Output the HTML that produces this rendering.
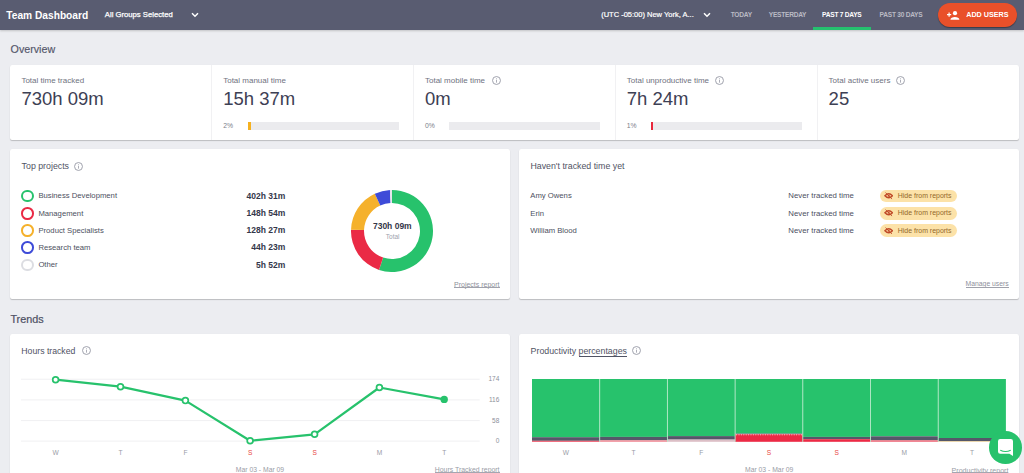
<!DOCTYPE html>
<html><head><meta charset="utf-8">
<style>
*{margin:0;padding:0;box-sizing:border-box}
html,body{width:1024px;height:473px;overflow:hidden;background:#ecedf1;font-family:"Liberation Sans",sans-serif}
.a{position:absolute;white-space:nowrap;line-height:1}
u{text-decoration:underline}
</style></head><body>
<div class="a" style="left:0.00px;top:0.00px;width:1024.00px;height:30.00px;background:#595c71;box-shadow:0 1px 2px rgba(0,0,0,0.18)"></div>
<div class="a " style="left:6.30px;top:10.52px;font-size:10.20px;font-weight:bold;color:#fff">Team Dashboard</div>
<div class="a " style="left:104.80px;top:11.28px;font-size:7.70px;color:#fff;-webkit-text-stroke:0.25px #fff">All Groups Selected</div>
<svg class="a" style="left:190.5px;top:12.2px" width="8" height="6" viewBox="0 0 8 6"><path d="M1 1.2 L4 4.2 L7 1.2" stroke="#fff" stroke-width="1.5" fill="none"/></svg>
<div class="a " style="left:601.20px;top:11.25px;font-size:7.50px;color:#fff;-webkit-text-stroke:0.2px #fff">(UTC -05:00) New York, A...</div>
<svg class="a" style="left:703px;top:12.3px" width="8" height="6" viewBox="0 0 8 6"><path d="M1 1.2 L4 4.2 L7 1.2" stroke="#fff" stroke-width="1.5" fill="none"/></svg>
<div class="a " style="left:730.70px;top:12.11px;font-size:6.60px;font-weight:bold;letter-spacing:-0.25px;color:#b9bac4">TODAY</div>
<div class="a " style="left:768.80px;top:12.11px;font-size:6.60px;font-weight:bold;letter-spacing:-0.25px;color:#b9bac4">YESTERDAY</div>
<div class="a " style="left:822.10px;top:12.11px;font-size:6.60px;font-weight:bold;letter-spacing:-0.25px;color:#fff">PAST 7 DAYS</div>
<div class="a " style="left:879.60px;top:12.11px;font-size:6.60px;font-weight:bold;letter-spacing:-0.25px;color:#b9bac4">PAST 30 DAYS</div>
<div class="a" style="left:813.30px;top:27.00px;width:57.80px;height:3.00px;background:#25c16f"></div>
<div class="a" style="left:938.00px;top:3.00px;width:79.30px;height:24.00px;border-radius:12px;background:#e9502a;box-shadow:0 1px 1px rgba(0,0,0,0.35)"></div>
<svg class="a" style="left:946.5px;top:10.5px" width="13" height="9" viewBox="0 0 13 9"><path d="M0 3.7h4.2M2.1 1.6v4.2" stroke="#fff" stroke-width="1.2"/><circle cx="8" cy="2.2" r="2.1" fill="#fff"/><path d="M3.4 8.7 C3.4 5.2 12.4 5.2 12.4 8.7Z" fill="#fff"/></svg>
<div class="a " style="left:966.20px;top:11.31px;font-size:7.20px;font-weight:bold;color:#fff">ADD USERS</div>
<div class="a " style="left:10.60px;top:44.24px;font-size:10.70px;color:#53566a;-webkit-text-stroke:0.15px #53566a">Overview</div>
<div class="a" style="left:10.00px;top:65.00px;width:1009.00px;height:75.00px;background:#fff;border-radius:2px;box-shadow:0 1px 1px rgba(0,0,0,0.2),0 0 1px rgba(0,0,0,0.06)"></div>
<div class="a" style="left:211.00px;top:65.00px;width:1.00px;height:75.00px;background:#f1f1f3"></div>
<div class="a" style="left:413.00px;top:65.00px;width:1.00px;height:75.00px;background:#f1f1f3"></div>
<div class="a" style="left:615.00px;top:65.00px;width:1.00px;height:75.00px;background:#f1f1f3"></div>
<div class="a" style="left:817.00px;top:65.00px;width:1.00px;height:75.00px;background:#f1f1f3"></div>
<div class="a " style="left:21.40px;top:76.63px;font-size:8.00px;color:#6f7280">Total time tracked</div>
<div class="a " style="left:21.40px;top:89.84px;font-size:18.50px;color:#3d4054">730h 09m</div>
<div class="a " style="left:223.20px;top:76.63px;font-size:8.00px;color:#6f7280">Total manual time</div>
<div class="a " style="left:223.20px;top:89.84px;font-size:18.50px;color:#3d4054">15h 37m</div>
<div class="a " style="left:223.20px;top:123.04px;font-size:6.80px;color:#7b7e8a">2%</div>
<div class="a" style="left:247.60px;top:122.00px;width:151.00px;height:8.00px;background:#ebebee"></div>
<div class="a" style="left:247.60px;top:122.00px;width:3.70px;height:8.00px;background:#f5b120"></div>
<div class="a " style="left:425.00px;top:76.63px;font-size:8.00px;color:#6f7280">Total mobile time</div>
<div class="a " style="left:425.00px;top:89.84px;font-size:18.50px;color:#3d4054">0m</div>
<div class="a " style="left:425.00px;top:123.04px;font-size:6.80px;color:#7b7e8a">0%</div>
<div class="a" style="left:449.40px;top:122.00px;width:151.00px;height:8.00px;background:#ebebee"></div>
<div class="a " style="left:626.80px;top:76.63px;font-size:8.00px;color:#6f7280">Total unproductive time</div>
<div class="a " style="left:626.80px;top:89.84px;font-size:18.50px;color:#3d4054">7h 24m</div>
<div class="a " style="left:626.80px;top:123.04px;font-size:6.80px;color:#7b7e8a">1%</div>
<div class="a" style="left:651.20px;top:122.00px;width:151.00px;height:8.00px;background:#ebebee"></div>
<div class="a" style="left:651.20px;top:122.00px;width:2.00px;height:8.00px;background:#e8283c"></div>
<div class="a " style="left:828.60px;top:76.63px;font-size:8.00px;color:#6f7280">Total active users</div>
<div class="a " style="left:828.60px;top:89.84px;font-size:18.50px;color:#3d4054">25</div>
<svg class="a" style="left:491.80px;top:76.00px" width="9" height="9" viewBox="0 0 10 10"><circle cx="5" cy="5" r="4.4" fill="none" stroke="#9a9ca8" stroke-width="1.05"/><rect x="4.55" y="4.2" width="0.9" height="3.2" fill="#9a9ca8"/><rect x="4.55" y="2.6" width="0.9" height="0.9" fill="#9a9ca8"/></svg>
<svg class="a" style="left:715.10px;top:76.10px" width="9" height="9" viewBox="0 0 10 10"><circle cx="5" cy="5" r="4.4" fill="none" stroke="#9a9ca8" stroke-width="1.05"/><rect x="4.55" y="4.2" width="0.9" height="3.2" fill="#9a9ca8"/><rect x="4.55" y="2.6" width="0.9" height="0.9" fill="#9a9ca8"/></svg>
<svg class="a" style="left:896.40px;top:76.10px" width="9" height="9" viewBox="0 0 10 10"><circle cx="5" cy="5" r="4.4" fill="none" stroke="#9a9ca8" stroke-width="1.05"/><rect x="4.55" y="4.2" width="0.9" height="3.2" fill="#9a9ca8"/><rect x="4.55" y="2.6" width="0.9" height="0.9" fill="#9a9ca8"/></svg>
<div class="a" style="left:10.00px;top:149.00px;width:500.30px;height:150.00px;background:#fff;border-radius:2px;box-shadow:0 1px 1px rgba(0,0,0,0.2),0 0 1px rgba(0,0,0,0.06)"></div>
<div class="a" style="left:519.00px;top:149.00px;width:500.30px;height:150.00px;background:#fff;border-radius:2px;box-shadow:0 1px 1px rgba(0,0,0,0.2),0 0 1px rgba(0,0,0,0.06)"></div>
<div class="a " style="left:21.60px;top:162.05px;font-size:8.80px;color:#505364">Top projects</div>
<svg class="a" style="left:73.80px;top:161.80px" width="9" height="9" viewBox="0 0 10 10"><circle cx="5" cy="5" r="4.4" fill="none" stroke="#9a9ca8" stroke-width="1.05"/><rect x="4.55" y="4.2" width="0.9" height="3.2" fill="#9a9ca8"/><rect x="4.55" y="2.6" width="0.9" height="0.9" fill="#9a9ca8"/></svg>
<div class="a" style="left:21.10px;top:189.70px;width:12.6px;height:12.6px;border-radius:50%;border:2.6px solid #27c26c"></div>
<div class="a " style="left:38.40px;top:192.28px;font-size:7.70px;color:#4c4f60">Business Development</div>
<div class="a " style="right:738.80px;top:191.60px;font-size:8.50px;font-weight:bold;color:#34374a">402h 31m</div>
<div class="a" style="left:21.10px;top:206.95px;width:12.6px;height:12.6px;border-radius:50%;border:2.6px solid #ea2a45"></div>
<div class="a " style="left:38.40px;top:209.53px;font-size:7.70px;color:#4c4f60">Management</div>
<div class="a " style="right:738.80px;top:208.85px;font-size:8.50px;font-weight:bold;color:#34374a">148h 54m</div>
<div class="a" style="left:21.10px;top:224.20px;width:12.6px;height:12.6px;border-radius:50%;border:2.6px solid #f5b12c"></div>
<div class="a " style="left:38.40px;top:226.78px;font-size:7.70px;color:#4c4f60">Product Specialists</div>
<div class="a " style="right:738.80px;top:226.10px;font-size:8.50px;font-weight:bold;color:#34374a">128h 27m</div>
<div class="a" style="left:21.10px;top:241.45px;width:12.6px;height:12.6px;border-radius:50%;border:2.6px solid #3e4bd8"></div>
<div class="a " style="left:38.40px;top:244.03px;font-size:7.70px;color:#4c4f60">Research team</div>
<div class="a " style="right:738.80px;top:243.35px;font-size:8.50px;font-weight:bold;color:#34374a">44h 23m</div>
<div class="a" style="left:21.10px;top:258.70px;width:12.6px;height:12.6px;border-radius:50%;border:2.6px solid #dcdde2"></div>
<div class="a " style="left:38.40px;top:261.28px;font-size:7.70px;color:#4c4f60">Other</div>
<div class="a " style="right:738.80px;top:260.60px;font-size:8.50px;font-weight:bold;color:#34374a">5h 52m</div>
<svg class="a" style="left:351.2px;top:189.7px" width="82" height="82" viewBox="0 0 82 82"><path d="M41.00 0.00A41 41 0 1 1 28.01 79.89L32.13 67.56A28 28 0 1 0 41.00 13.00Z" fill="#27c26c"/><path d="M28.01 79.89A41 41 0 0 1 0.02 39.65L13.02 40.08A28 28 0 0 0 32.13 67.56Z" fill="#ea2a45"/><path d="M0.02 39.65A41 41 0 0 1 23.82 3.77L29.27 15.58A28 28 0 0 0 13.02 40.08Z" fill="#f5b12c"/><path d="M23.82 3.77A41 41 0 0 1 38.93 0.05L39.59 13.04A28 28 0 0 0 29.27 15.58Z" fill="#3e4bd8"/><path d="M38.93 0.05A41 41 0 0 1 41.00 0.00L41.00 13.00A28 28 0 0 0 39.59 13.04Z" fill="#e6e6ea"/></svg>
<div class="a " style="left:372.30px;top:222.00px;font-size:8.50px;width:40px;text-align:center;font-weight:bold;color:#34374a">730h 09m</div>
<div class="a " style="left:372.70px;top:233.70px;font-size:6.50px;width:40px;text-align:center;color:#a0a2ad">Total</div>
<div class="a " style="left:454.00px;top:281.07px;font-size:7.00px;color:#8e909b">Projects report</div>
<div class="a" style="left:454.00px;top:287.40px;width:45.70px;height:0.80px;background:#9fa1ab"></div>
<div class="a " style="left:530.40px;top:161.95px;font-size:8.80px;color:#505364">Haven't tracked time yet</div>
<div class="a " style="left:530.30px;top:192.38px;font-size:7.70px;color:#4c4f60">Amy Owens</div>
<div class="a " style="left:788.30px;top:192.30px;font-size:7.80px;color:#4c4f60">Never tracked time</div>
<div class="a" style="left:879.50px;top:189.60px;width:77.00px;height:12.80px;border-radius:6.5px;background:#fce2a8"></div>
<svg class="a" style="left:884px;top:192.00px" width="9.4" height="7.6" viewBox="0 0 10 8"><path d="M1 4 Q5 -0.2 9 4 Q5 8.2 1 4Z" fill="none" stroke="#c04a28" stroke-width="1.5"/><circle cx="5" cy="4" r="1.1" fill="#c04a28"/><path d="M1.6 0.6 L8.6 7.5" stroke="#c04a28" stroke-width="0.9"/></svg>
<div class="a " style="left:897.80px;top:193.11px;font-size:6.96px;color:#93692b">Hide from reports</div>
<div class="a " style="left:530.30px;top:209.58px;font-size:7.70px;color:#4c4f60">Erin</div>
<div class="a " style="left:788.30px;top:209.50px;font-size:7.80px;color:#4c4f60">Never tracked time</div>
<div class="a" style="left:879.50px;top:206.90px;width:77.00px;height:12.80px;border-radius:6.5px;background:#fce2a8"></div>
<svg class="a" style="left:884px;top:209.30px" width="9.4" height="7.6" viewBox="0 0 10 8"><path d="M1 4 Q5 -0.2 9 4 Q5 8.2 1 4Z" fill="none" stroke="#c04a28" stroke-width="1.5"/><circle cx="5" cy="4" r="1.1" fill="#c04a28"/><path d="M1.6 0.6 L8.6 7.5" stroke="#c04a28" stroke-width="0.9"/></svg>
<div class="a " style="left:897.80px;top:210.41px;font-size:6.96px;color:#93692b">Hide from reports</div>
<div class="a " style="left:530.30px;top:226.78px;font-size:7.70px;color:#4c4f60">William Blood</div>
<div class="a " style="left:788.30px;top:226.70px;font-size:7.80px;color:#4c4f60">Never tracked time</div>
<div class="a" style="left:879.50px;top:224.20px;width:77.00px;height:12.80px;border-radius:6.5px;background:#fce2a8"></div>
<svg class="a" style="left:884px;top:226.60px" width="9.4" height="7.6" viewBox="0 0 10 8"><path d="M1 4 Q5 -0.2 9 4 Q5 8.2 1 4Z" fill="none" stroke="#c04a28" stroke-width="1.5"/><circle cx="5" cy="4" r="1.1" fill="#c04a28"/><path d="M1.6 0.6 L8.6 7.5" stroke="#c04a28" stroke-width="0.9"/></svg>
<div class="a " style="left:897.80px;top:227.71px;font-size:6.96px;color:#93692b">Hide from reports</div>
<div class="a " style="left:965.60px;top:280.84px;font-size:6.80px;color:#8e909b">Manage users</div>
<div class="a" style="left:965.60px;top:287.10px;width:43.20px;height:0.80px;background:#9fa1ab"></div>
<div class="a " style="left:10.40px;top:313.86px;font-size:10.80px;color:#4d5064;-webkit-text-stroke:0.2px #4d5064">Trends</div>
<div class="a" style="left:10.00px;top:334.00px;width:500.30px;height:160.00px;background:#fff;border-radius:2px;box-shadow:0 1px 1px rgba(0,0,0,0.2),0 0 1px rgba(0,0,0,0.06)"></div>
<div class="a" style="left:519.00px;top:334.00px;width:500.30px;height:160.00px;background:#fff;border-radius:2px;box-shadow:0 1px 1px rgba(0,0,0,0.2),0 0 1px rgba(0,0,0,0.06)"></div>
<div class="a " style="left:21.30px;top:346.94px;font-size:8.70px;color:#505364">Hours tracked</div>
<svg class="a" style="left:82.10px;top:346.00px" width="9" height="9" viewBox="0 0 10 10"><circle cx="5" cy="5" r="4.4" fill="none" stroke="#9a9ca8" stroke-width="1.05"/><rect x="4.55" y="4.2" width="0.9" height="3.2" fill="#9a9ca8"/><rect x="4.55" y="2.6" width="0.9" height="0.9" fill="#9a9ca8"/></svg>
<svg class="a" style="left:0;top:0" width="1024" height="473"><rect x="21" y="378.70" width="458.7" height="1" fill="#f0f0f2"/><rect x="21" y="399.40" width="458.7" height="1" fill="#f0f0f2"/><rect x="21" y="420.10" width="458.7" height="1" fill="#f0f0f2"/><rect x="21" y="440.60" width="458.7" height="1" fill="#f0f0f2"/><polyline points="55.6,379.7 120.5,386.7 185.4,400.6 250.1,440.8 314.6,434.3 379.4,387.5 444.2,399.4" fill="none" stroke="#27c26c" stroke-width="2.2" stroke-linejoin="round"/><circle cx="55.6" cy="379.7" r="2.9" fill="#fff" stroke="#27c26c" stroke-width="1.7"/><circle cx="120.5" cy="386.7" r="2.9" fill="#fff" stroke="#27c26c" stroke-width="1.7"/><circle cx="185.4" cy="400.6" r="2.9" fill="#fff" stroke="#27c26c" stroke-width="1.7"/><circle cx="250.1" cy="440.8" r="2.9" fill="#fff" stroke="#27c26c" stroke-width="1.7"/><circle cx="314.6" cy="434.3" r="2.9" fill="#fff" stroke="#27c26c" stroke-width="1.7"/><circle cx="379.4" cy="387.5" r="2.9" fill="#fff" stroke="#27c26c" stroke-width="1.7"/><circle cx="444.2" cy="399.4" r="3.7" fill="#27c26c"/></svg>
<div class="a " style="right:524.70px;top:376.45px;font-size:6.50px;color:#8e909b">174</div>
<div class="a " style="right:524.70px;top:397.15px;font-size:6.50px;color:#8e909b">116</div>
<div class="a " style="right:524.70px;top:417.85px;font-size:6.50px;color:#8e909b">58</div>
<div class="a " style="right:524.70px;top:438.35px;font-size:6.50px;color:#8e909b">0</div>
<div class="a " style="left:35.60px;top:450.11px;font-size:6.60px;width:40px;text-align:center;color:#9a9ca6">W</div>
<div class="a " style="left:100.50px;top:450.11px;font-size:6.60px;width:40px;text-align:center;color:#9a9ca6">T</div>
<div class="a " style="left:165.40px;top:450.11px;font-size:6.60px;width:40px;text-align:center;color:#9a9ca6">F</div>
<div class="a " style="left:230.10px;top:450.11px;font-size:6.60px;width:40px;text-align:center;color:#e8473f">S</div>
<div class="a " style="left:294.60px;top:450.11px;font-size:6.60px;width:40px;text-align:center;color:#e8473f">S</div>
<div class="a " style="left:359.40px;top:450.11px;font-size:6.60px;width:40px;text-align:center;color:#9a9ca6">M</div>
<div class="a " style="left:424.20px;top:450.11px;font-size:6.60px;width:40px;text-align:center;color:#9a9ca6">T</div>
<div class="a " style="left:235.80px;top:466.84px;font-size:6.80px;color:#9a9ca6">Mar 03 - Mar 09</div>
<div class="a " style="left:434.80px;top:467.26px;font-size:6.90px;color:#9a9ca6">Hours Tracked report</div>
<div class="a" style="left:434.80px;top:472.00px;width:64.80px;height:1.00px;background:#a4a6b0"></div>
<div class="a " style="left:530.60px;top:346.95px;font-size:8.80px;color:#505364">Productivity percentages</div>
<div class="a" style="left:578.90px;top:356.00px;width:48.10px;height:1.00px;background:#505364"></div>
<svg class="a" style="left:631.50px;top:346.00px" width="9" height="9" viewBox="0 0 10 10"><circle cx="5" cy="5" r="4.4" fill="none" stroke="#9a9ca8" stroke-width="1.05"/><rect x="4.55" y="4.2" width="0.9" height="3.2" fill="#9a9ca8"/><rect x="4.55" y="2.6" width="0.9" height="0.9" fill="#9a9ca8"/></svg>
<svg class="a" style="left:0;top:0" width="1024" height="473"><rect x="532.00" y="379" width="67.70" height="58.20" fill="#27c26c"/><rect x="532.00" y="437.20" width="67.70" height="3.60" fill="#555769"/><rect x="532.00" y="440.80" width="67.70" height="1.00" fill="#ee4d61"/><rect x="599.70" y="379" width="67.70" height="57.90" fill="#27c26c"/><rect x="599.70" y="436.90" width="67.70" height="3.40" fill="#555769"/><rect x="599.70" y="440.30" width="67.70" height="1.50" fill="#f08a96"/><rect x="667.40" y="379" width="67.70" height="57.10" fill="#27c26c"/><rect x="667.40" y="436.10" width="67.70" height="3.50" fill="#555769"/><rect x="667.40" y="439.60" width="67.70" height="2.20" fill="#dcbfc6"/><rect x="735.10" y="379" width="67.70" height="54.60" fill="#27c26c"/><rect x="735.10" y="433.60" width="67.70" height="0.60" fill="#555769"/><rect x="735.10" y="434.20" width="67.70" height="7.60" fill="#ec2a45"/><rect x="802.80" y="379" width="67.70" height="57.90" fill="#27c26c"/><rect x="802.80" y="436.90" width="67.70" height="2.30" fill="#555769"/><rect x="802.80" y="439.20" width="67.70" height="2.60" fill="#ec2a45"/><rect x="870.50" y="379" width="67.70" height="57.30" fill="#27c26c"/><rect x="870.50" y="436.30" width="67.70" height="4.00" fill="#555769"/><rect x="870.50" y="440.30" width="67.70" height="1.50" fill="#ee6a7a"/><rect x="938.20" y="379" width="67.70" height="59.00" fill="#27c26c"/><rect x="938.20" y="438.00" width="67.70" height="3.20" fill="#555769"/><rect x="938.20" y="441.20" width="67.70" height="0.60" fill="#f3d38a"/><line x1="736.10" x2="801.80" y1="434.8" y2="434.8" stroke="#fff" stroke-width="0.8" stroke-dasharray="1 1.4" opacity="0.9"/><rect x="599.25" y="379" width="0.9" height="62.8" fill="#b5e8c8"/><rect x="666.95" y="379" width="0.9" height="62.8" fill="#b5e8c8"/><rect x="734.65" y="379" width="0.9" height="62.8" fill="#b5e8c8"/><rect x="802.35" y="379" width="0.9" height="62.8" fill="#b5e8c8"/><rect x="870.05" y="379" width="0.9" height="62.8" fill="#b5e8c8"/><rect x="937.75" y="379" width="0.9" height="62.8" fill="#b5e8c8"/></svg>
<div class="a " style="left:545.85px;top:450.11px;font-size:6.60px;width:40px;text-align:center;color:#9a9ca6">W</div>
<div class="a " style="left:613.55px;top:450.11px;font-size:6.60px;width:40px;text-align:center;color:#9a9ca6">T</div>
<div class="a " style="left:681.25px;top:450.11px;font-size:6.60px;width:40px;text-align:center;color:#9a9ca6">F</div>
<div class="a " style="left:748.95px;top:450.11px;font-size:6.60px;width:40px;text-align:center;color:#e8473f">S</div>
<div class="a " style="left:816.65px;top:450.11px;font-size:6.60px;width:40px;text-align:center;color:#e8473f">S</div>
<div class="a " style="left:884.35px;top:450.11px;font-size:6.60px;width:40px;text-align:center;color:#9a9ca6">M</div>
<div class="a " style="left:952.05px;top:450.11px;font-size:6.60px;width:40px;text-align:center;color:#9a9ca6">T</div>
<div class="a " style="left:745.00px;top:466.84px;font-size:6.80px;color:#9a9ca6">Mar 03 - Mar 09</div>
<div class="a " style="left:951.60px;top:467.13px;font-size:7.05px;color:#9a9ca6">Productivity report</div>
<div class="a" style="left:951.60px;top:472.00px;width:56.90px;height:1.00px;background:#a4a6b0"></div>
<div class="a" style="left:989.20px;top:431.40px;width:32.60px;height:32.60px;border-radius:50%;background:#27c26c"></div>
<svg class="a" style="left:998px;top:439px" width="15" height="17" viewBox="0 0 15 17"><path d="M2.2 0h10.6a2.2 2.2 0 0 1 2.2 2.2V17l-3.6-2.2H2.2A2.2 2.2 0 0 1 0 12.6V2.2A2.2 2.2 0 0 1 2.2 0z" fill="#fff"/><path d="M2.3 11.2q5.2 2.6 10.4 0" stroke="#27c26c" stroke-width="1.2" fill="none"/></svg>
</body></html>
